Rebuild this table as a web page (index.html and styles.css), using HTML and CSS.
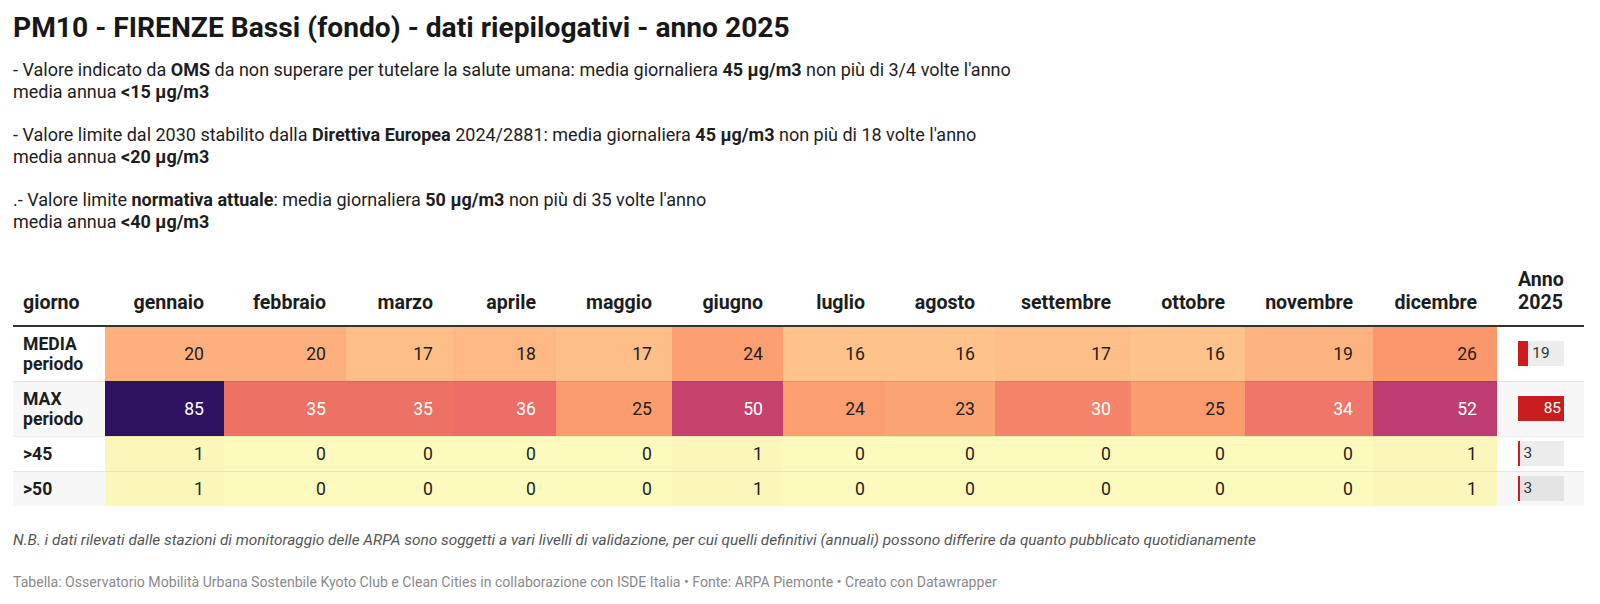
FILE: index.html
```html
<!DOCTYPE html>
<html lang="it">
<head>
<meta charset="utf-8">
<title>PM10 - FIRENZE Bassi</title>
<link rel="stylesheet" href="styles.css">
</head>
<body>
<div class="chart">
  <h1 class="title">PM10 - FIRENZE Bassi (fondo) - dati riepilogativi - anno 2025</h1>
  <div class="desc">
    <p>- Valore indicato da <b>OMS</b> da non superare per tutelare la salute umana: media giornaliera <b>45 µg/m3</b> non più di 3/4 volte l'anno<br>media annua <b>&lt;15 µg/m3</b></p>
    <p>- Valore limite dal 2030 stabilito dalla <b>Direttiva Europea</b> 2024/2881: media giornaliera <b>45 µg/m3</b> non più di 18 volte l'anno<br>media annua <b>&lt;20 µg/m3</b></p>
    <p>.- Valore limite <b>normativa attuale</b>: media giornaliera <b>50 µg/m3</b> non più di 35 volte l'anno<br>media annua <b>&lt;40 µg/m3</b></p>
  </div>
  <table class="data">
    <colgroup>
      <col class="c-label"><col class="c-gen"><col class="c-feb"><col class="c-mar"><col class="c-apr"><col class="c-mag"><col class="c-giu"><col class="c-lug"><col class="c-ago"><col class="c-set"><col class="c-ott"><col class="c-nov"><col class="c-dic"><col class="c-anno">
    </colgroup>
    <thead>
      <tr>
        <th class="lbl">giorno</th>
        <th>gennaio</th><th>febbraio</th><th>marzo</th><th>aprile</th><th>maggio</th><th>giugno</th><th>luglio</th><th>agosto</th><th>settembre</th><th>ottobre</th><th>novembre</th><th>dicembre</th>
        <th class="anno">Anno<br>2025</th>
      </tr>
    </thead>
    <tbody>
      <tr class="tall">
        <td class="lbl">MEDIA<br>periodo</td>
        <td style="background:#fdaf7d">20</td>
        <td style="background:#fdaf7d">20</td>
        <td style="background:#febe88">17</td>
        <td style="background:#fdb883">18</td>
        <td style="background:#febe88">17</td>
        <td style="background:#fb9e70">24</td>
        <td style="background:#fec28b">16</td>
        <td style="background:#fec28b">16</td>
        <td style="background:#febe88">17</td>
        <td style="background:#fec28b">16</td>
        <td style="background:#fdb37f">19</td>
        <td style="background:#fb986b">26</td>
        <td class="anno"><div class="track"><div class="fill" style="width:22.4%"></div><span class="val">19</span></div></td>
      </tr>
      <tr class="tall alt">
        <td class="lbl">MAX<br>periodo</td>
        <td class="inv" style="background:#2e1160">85</td>
        <td class="inv" style="background:#ee7166">35</td>
        <td class="inv" style="background:#ee7166">35</td>
        <td class="inv" style="background:#ed6e66">36</td>
        <td style="background:#fb9c6e">25</td>
        <td class="inv" style="background:#c6426d">50</td>
        <td style="background:#fb9f70">24</td>
        <td style="background:#fca373">23</td>
        <td class="inv" style="background:#f5856a">30</td>
        <td style="background:#fb9c6e">25</td>
        <td class="inv" style="background:#ef7668">34</td>
        <td class="inv" style="background:#be3d71">52</td>
        <td class="anno"><div class="track full"><div class="fill" style="width:100%"></div><span class="val">85</span></div></td>
      </tr>
      <tr>
        <td class="lbl">&gt;45</td>
        <td style="background:#fbf6b9">1</td>
        <td style="background:#fcfabd">0</td>
        <td style="background:#fcfabd">0</td>
        <td style="background:#fcfabd">0</td>
        <td style="background:#fcfabd">0</td>
        <td style="background:#fbf6b9">1</td>
        <td style="background:#fcfabd">0</td>
        <td style="background:#fcfabd">0</td>
        <td style="background:#fcfabd">0</td>
        <td style="background:#fcfabd">0</td>
        <td style="background:#fcfabd">0</td>
        <td style="background:#fbf6b9">1</td>
        <td class="anno"><div class="track"><div class="fill" style="width:3.5%"></div><span class="val">3</span></div></td>
      </tr>
      <tr class="alt">
        <td class="lbl">&gt;50</td>
        <td style="background:#fbf6b9">1</td>
        <td style="background:#fcfabd">0</td>
        <td style="background:#fcfabd">0</td>
        <td style="background:#fcfabd">0</td>
        <td style="background:#fcfabd">0</td>
        <td style="background:#fbf6b9">1</td>
        <td style="background:#fcfabd">0</td>
        <td style="background:#fcfabd">0</td>
        <td style="background:#fcfabd">0</td>
        <td style="background:#fcfabd">0</td>
        <td style="background:#fcfabd">0</td>
        <td style="background:#fbf6b9">1</td>
        <td class="anno"><div class="track"><div class="fill" style="width:3.5%"></div><span class="val">3</span></div></td>
      </tr>
    </tbody>
  </table>
  <p class="notes">N.B. i dati rilevati dalle stazioni di monitoraggio delle ARPA sono soggetti a vari livelli di validazione, per cui quelli definitivi (annuali) possono differire da quanto pubblicato quotidianamente</p>
  <p class="footer">Tabella: Osservatorio Mobilità Urbana Sostenbile Kyoto Club e Clean Cities in collaborazione con ISDE Italia • Fonte: ARPA Piemonte • Creato con Datawrapper</p>
</div>
</body>
</html>
```

FILE: styles.css
```css
* { box-sizing: border-box; }

html, body {
  margin: 0;
  padding: 0;
  background: #ffffff;
}

body {
  font-family: Roboto, "Liberation Sans", Arial, sans-serif;
  color: #1d1d1d;
}

.chart {
  padding: 12px 16px 0 13px;
}

.title {
  margin: 0;
  font-size: 28.2px;
  line-height: 31px;
  font-weight: 700;
  color: #181818;
}

.desc {
  margin-top: 16px;
  font-size: 18px;
  line-height: 21.7px;
  color: #1d1d1d;
}

.desc p {
  margin: 0 0 21.7px 0;
}

.desc p:last-child {
  margin-bottom: 0;
}

.desc b {
  font-weight: 700;
}

.data {
  margin-top: 27px;
  width: 1571px;
  border-collapse: collapse;
  table-layout: fixed;
}

.c-label { width: 92px; }
.c-gen { width: 119px; }
.c-feb { width: 122px; }
.c-mar { width: 107px; }
.c-apr { width: 103px; }
.c-mag { width: 116px; }
.c-giu { width: 111px; }
.c-lug { width: 102px; }
.c-ago { width: 110px; }
.c-set { width: 136px; }
.c-ott { width: 114px; }
.c-nov { width: 128px; }
.c-dic { width: 124px; }
.c-anno { width: 87px; }

.data th {
  font-size: 19.6px;
  line-height: 23px;
  font-weight: 700;
  color: #1d1d1d;
  text-align: right;
  vertical-align: bottom;
  padding: 8px 20px 11px 10px;
  border-bottom: 2px solid #333333;
  white-space: nowrap;
}

.data th.lbl {
  text-align: left;
  padding-left: 10px;
}

.data th.anno {
  text-align: left;
  padding-left: 21px;
  padding-right: 8px;
}

.data td {
  font-size: 17.6px;
  line-height: 20px;
  padding: 7px 20px 7px 10px;
  text-align: right;
  vertical-align: middle;
  color: #1d1d1d;
}

.data tbody tr + tr td {
  border-top: 1px solid rgba(0, 0, 0, 0.07);
}

.data td.lbl {
  text-align: left;
  font-weight: 700;
  padding-left: 10px;
}

.data tr.alt td.lbl,
.data tr.alt td.anno {
  background: #f7f7f7;
}

.data td.inv {
  color: #ffffff;
}

.data td.anno {
  padding: 0 20px 0 21px;
  text-align: left;
}

.track {
  position: relative;
  display: flex;
  align-items: center;
  height: 25px;
  background: rgba(0, 0, 0, 0.075);
}

.fill {
  height: 100%;
  background: #c71e1d;
  flex: none;
}

.val {
  margin-left: 4px;
  font-size: 15.4px;
  line-height: 25px;
  color: #333333;
}

.track.full .val {
  position: absolute;
  right: 3px;
  top: 0;
  margin: 0;
  color: #ffffff;
}

.notes {
  margin: 24px 0 0 0;
  font-size: 15.4px;
  line-height: 20px;
  font-style: italic;
  color: #555555;
}

.footer {
  margin: 24px 0 0 0;
  font-size: 14.1px;
  line-height: 17px;
  color: #8a8a8a;
}
```
